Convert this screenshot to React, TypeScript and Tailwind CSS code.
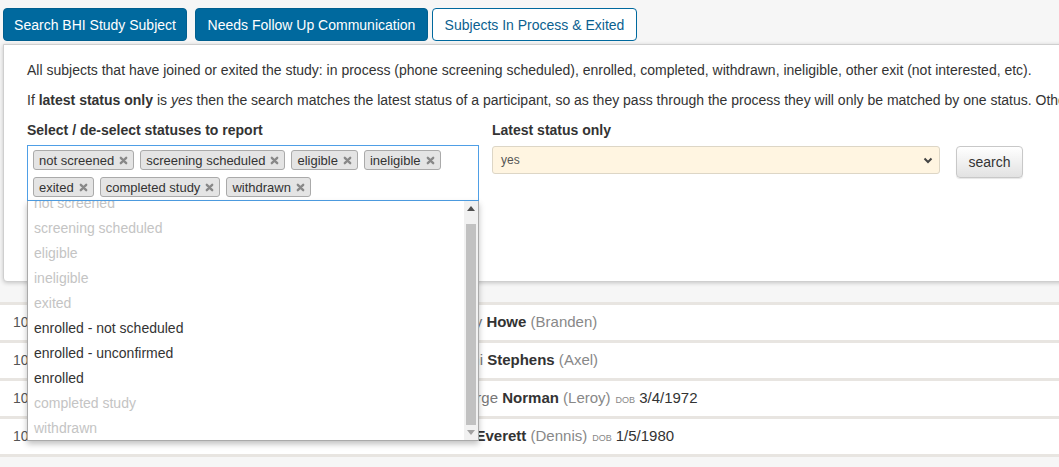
import React from 'react'

const chips = ['not screened', 'screening scheduled', 'eligible', 'ineligible', 'exited', 'completed study', 'withdrawn']

const options = [
  { label: 'not screened', disabled: true },
  { label: 'screening scheduled', disabled: true },
  { label: 'eligible', disabled: true },
  { label: 'ineligible', disabled: true },
  { label: 'exited', disabled: true },
  { label: 'enrolled - not scheduled', disabled: false },
  { label: 'enrolled - unconfirmed', disabled: false },
  { label: 'enrolled', disabled: false },
  { label: 'completed study', disabled: true },
  { label: 'withdrawn', disabled: true },
]

const rows = [
  { id: '1024', first: 'Andy', last: 'Howe', pref: 'Branden', dob: '' },
  { id: '1031', first: 'Remi', last: 'Stephens', pref: 'Axel', dob: '' },
  { id: '1047', first: 'George', last: 'Norman', pref: 'Leroy', dob: '3/4/1972' },
  { id: '1052', first: 'Jim', last: 'Everett', pref: 'Dennis', dob: '1/5/1980' },
]

function ChipX() {
  return (
    <svg width="9" height="9" viewBox="0 0 10 10" className="ml-[5px]">
      <path d="M2 2 L8 8 M8 2 L2 8" stroke="#888" strokeWidth="2.6" strokeLinecap="round" />
    </svg>
  )
}

function StatusPicker() {
  return (
    <div className="relative w-[452px]">
      <div className="h-[56px] border border-[#4f9fe6] bg-white flex flex-wrap content-start gap-x-[6px] gap-y-[7px] pt-[4px] pl-[5px]">
        {chips.map(c => (
          <span
            key={c}
            className="h-[20px] flex items-center pl-[5px] pr-[5px] bg-[#e4e4e4] border border-[#aaa] rounded-[3px] text-[13px] text-[#333] leading-none"
          >
            {c}
            <ChipX />
          </span>
        ))}
      </div>
      <div className="absolute left-0 top-full w-full h-[240px] bg-white border border-t-0 border-[#aaa] shadow-[0_3px_6px_rgba(0,0,0,0.25)] z-20 overflow-hidden">
        <ul className="-mt-[10px] pl-[6px] pr-[16px]">
          {options.map(o => (
            <li
              key={o.label}
              className={`h-[25px] leading-[25px] text-[14px] ${o.disabled ? 'text-[#c4c4c4]' : 'text-[#333]'}`}
            >
              {o.label}
            </li>
          ))}
        </ul>
        <div className="absolute right-0 top-0 bottom-0 w-[14px] bg-[#f1f1f1] flex flex-col items-center">
          <svg width="8" height="5" viewBox="0 0 8 5" className="mt-[5px]">
            <path d="M0 5 L4 0 L8 5 Z" fill="#505050" />
          </svg>
          <div className="mt-[13px] w-[10px] h-[201px] bg-[#c1c1c1]" />
          <svg width="8" height="5" viewBox="0 0 8 5" className="mt-[5px]">
            <path d="M0 0 L8 0 L4 5 Z" fill="#a3a3a3" />
          </svg>
        </div>
      </div>
    </div>
  )
}

export default function App() {
  return (
    <div className="w-[1059px] h-[467px] overflow-hidden bg-[#f6f6f6] font-['Liberation_Sans',Arial,sans-serif] text-[14px] text-[#333]">
      <div className="flex pt-[8px] pl-[3px]">
        <button className="w-[184px] h-[33px] pt-[1px] rounded-[4px] bg-[#00699e] border border-[#005f8f] text-white text-[14px]">
          Search BHI Study Subject
        </button>
        <button className="ml-[8px] w-[233px] h-[33px] pt-[1px] rounded-[4px] bg-[#00699e] border border-[#005f8f] text-white text-[14px]">
          Needs Follow Up Communication
        </button>
        <button className="ml-[4px] w-[205px] h-[33px] pt-[1px] rounded-[4px] bg-white border border-[#00699e] text-[#0b5f8f] text-[14px]">
          Subjects In Process &amp; Exited
        </button>
      </div>

      <div className="relative z-10 mt-[3px] ml-[3px] w-[1100px] h-[238px] bg-white border border-[#cfcfcf] rounded-bl-[4px] shadow-[0_1px_4px_rgba(0,0,0,0.2)] pl-[23px] pt-[15px]">
        <p className="leading-[20px] whitespace-nowrap">
          All subjects that have joined or exited the study: in process (phone screening scheduled), enrolled, completed, withdrawn, ineligible, other exit (not interested, etc).
        </p>
        <p className="mt-[10px] leading-[20px] whitespace-nowrap">
          If <b>latest status only</b> is <i>yes</i> then the search matches the latest status of a participant, so as they pass through the process they will only be matched by one status. Otherwise all statuses are matched.
        </p>
        <div className="mt-[10px] flex">
          <div>
            <div className="font-bold leading-[20px]">Select / de-select statuses to report</div>
            <div className="mt-[5px]">
              <StatusPicker />
            </div>
          </div>
          <div className="ml-[13px]">
            <div className="font-bold leading-[20px]">Latest status only</div>
            <div className="mt-[6px] flex">
              <div className="w-[448px] h-[28px] bg-[#fff5e1] border border-[#ddd6c6] rounded-[3px] flex items-center justify-between pl-[8px] pr-[6px]">
                <span className="text-[12px] text-[#555]">yes</span>
                <svg width="10" height="7" viewBox="0 0 10 7">
                  <path d="M1.5 1.5 L5 5 L8.5 1.5" fill="none" stroke="#444" strokeWidth="2" />
                </svg>
              </div>
              <button className="ml-[16px] w-[67px] h-[32px] rounded-[4px] border border-[#c8c8c8] bg-gradient-to-b from-white to-[#e2e2e2] shadow-[0_1px_1px_rgba(0,0,0,0.1)] text-[14px] text-[#333]">
                search
              </button>
            </div>
          </div>
        </div>
      </div>

      <div className="mt-[20px] border-t-[3px] border-[#e8e5e1]">
        {rows.map(r => (
          <div key={r.id} className="h-[38px] bg-white border-b-[3px] border-[#e8e5e1] flex items-center">
            <div className="w-[448px] pl-[13px] text-[#555]">{r.id}</div>
            <div className="whitespace-nowrap text-[15px]">
              <span className="text-[#777]">{r.first} </span>
              <b className="text-[#333]">{r.last}</b>
              <span className="text-[#888]"> ({r.pref})</span>
              {r.dob && (
                <>
                  <span className="text-[9px] text-[#888] uppercase ml-[5px] mr-[4px]">dob</span>
                  <span>{r.dob}</span>
                </>
              )}
            </div>
          </div>
        ))}
      </div>
    </div>
  )
}
